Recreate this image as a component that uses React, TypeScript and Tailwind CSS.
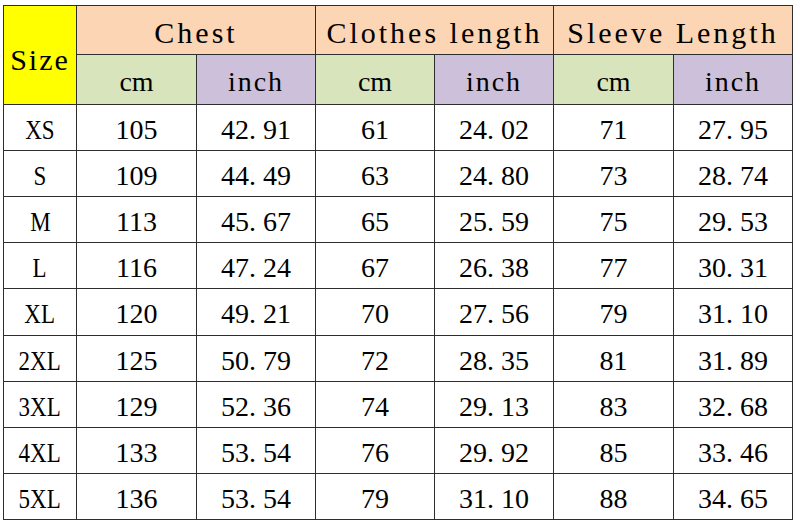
const rows: [string, string, string, string, string, string, string][] = [
  ["XS", "105", "42.91", "61", "24.02", "71", "27.95"],
  ["S", "109", "44.49", "63", "24.80", "73", "28.74"],
  ["M", "113", "45.67", "65", "25.59", "75", "29.53"],
  ["L", "116", "47.24", "67", "26.38", "77", "30.31"],
  ["XL", "120", "49.21", "70", "27.56", "79", "31.10"],
  ["2XL", "125", "50.79", "72", "28.35", "81", "31.89"],
  ["3XL", "129", "52.36", "74", "29.13", "83", "32.68"],
  ["4XL", "133", "53.54", "76", "29.92", "85", "33.46"],
  ["5XL", "136", "53.54", "79", "31.10", "88", "34.65"],
];

// decimal point gets a half-em box, like the spreadsheet font
function Num({ value }: { value: string }) {
  const [a, b] = value.split(".");
  if (b === undefined) return <span>{value}</span>;
  return (
    <span>
      {a}
      <span className="inline-block w-[0.5em] text-left">.</span>
      {b}
    </span>
  );
}

const cell = "flex items-center justify-center border-r border-b border-[#2e2e2e]";

export default function App() {
  return (
    <div className="w-[800px] h-[522px] bg-white pl-[3px] pt-[5px] font-['Liberation_Serif',serif] text-black">
      <div className="grid grid-cols-[73px_120px_119px_119px_119px_120px_119px] grid-rows-[49px_50px_46px_46px_46px_46px_47px_46px_46px_46px_46px] w-fit border-t border-l border-[#2e2e2e]">
        <div className={`${cell} row-span-2 bg-[#ffff00] text-[30px] tracking-[2px] pt-[8px]`}>
          Size
        </div>
        <div className={`${cell} col-span-2 bg-[#fcd5b4] text-[30px] tracking-[3px] pt-[4px]`}>
          Chest
        </div>
        <div className={`${cell} col-span-2 bg-[#fcd5b4] text-[30px] tracking-[3px] pt-[4px]`}>
          Clothes length
        </div>
        <div className={`${cell} col-span-2 bg-[#fcd5b4] text-[30px] tracking-[3px] pt-[4px]`}>
          Sleeve Length
        </div>
        {[0, 1, 2].map((i) => (
          <div key={i} className="contents">
            <div className={`${cell} bg-[#d8e4bc] text-[28px] pt-[5px]`}>cm</div>
            <div className={`${cell} bg-[#ccc0da] text-[28px] tracking-[2px] pt-[5px]`}>inch</div>
          </div>
        ))}
        {rows.map((r) => (
          <div key={r[0]} className="contents">
            {r.map((v, j) => (
              <div key={j} className={`${cell} text-[28px] pt-[4px]`}>
                {j === 0 ? (
                  <span className="inline-block scale-x-[0.82]">{v}</span>
                ) : (
                  <Num value={v} />
                )}
              </div>
            ))}
          </div>
        ))}
      </div>
    </div>
  );
}
